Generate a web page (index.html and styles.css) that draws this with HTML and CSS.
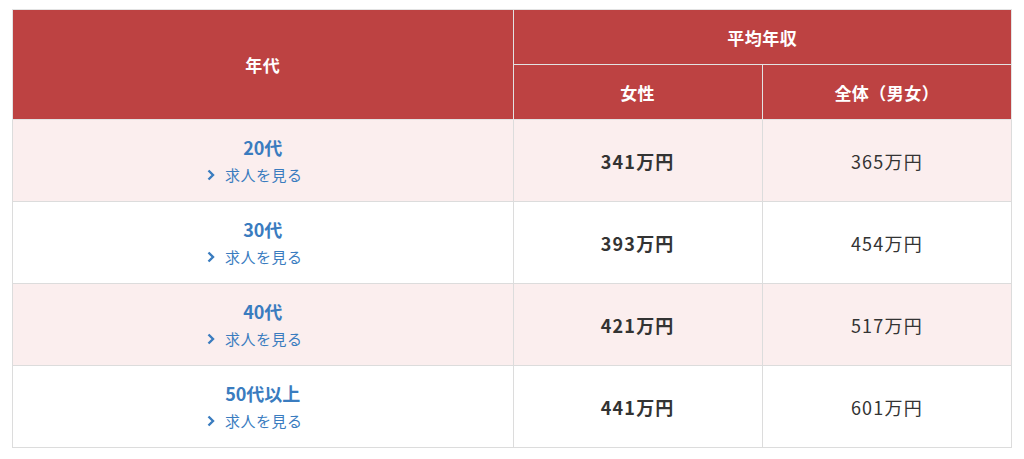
FILE: index.html
```html
<!DOCTYPE html>
<html lang="ja">
<head>
<meta charset="utf-8">
<link rel="stylesheet" href="styles.css">
</head>
<body>
<table class="salary">
  <thead>
    <tr>
      <th rowspan="2" class="col-age">年代</th>
      <th colspan="2">平均年収</th>
    </tr>
    <tr>
      <th class="col-val">女性</th>
      <th class="col-val">全体（男女）</th>
    </tr>
  </thead>
  <tbody>
    <tr class="odd">
      <td><div class="age">20代</div><a class="link" href="#"><svg class="chev" viewBox="0 0 8 12" width="8" height="12"><path d="M1.5 1.5 L6 6 L1.5 10.5" fill="none" stroke="currentColor" stroke-width="2.4"/></svg>求人を見る</a></td>
      <td class="num f">341万円</td>
      <td class="num a">365万円</td>
    </tr>
    <tr>
      <td><div class="age">30代</div><a class="link" href="#"><svg class="chev" viewBox="0 0 8 12" width="8" height="12"><path d="M1.5 1.5 L6 6 L1.5 10.5" fill="none" stroke="currentColor" stroke-width="2.4"/></svg>求人を見る</a></td>
      <td class="num f">393万円</td>
      <td class="num a">454万円</td>
    </tr>
    <tr class="odd">
      <td><div class="age">40代</div><a class="link" href="#"><svg class="chev" viewBox="0 0 8 12" width="8" height="12"><path d="M1.5 1.5 L6 6 L1.5 10.5" fill="none" stroke="currentColor" stroke-width="2.4"/></svg>求人を見る</a></td>
      <td class="num f">421万円</td>
      <td class="num a">517万円</td>
    </tr>
    <tr>
      <td><div class="age">50代以上</div><a class="link" href="#"><svg class="chev" viewBox="0 0 8 12" width="8" height="12"><path d="M1.5 1.5 L6 6 L1.5 10.5" fill="none" stroke="currentColor" stroke-width="2.4"/></svg>求人を見る</a></td>
      <td class="num f">441万円</td>
      <td class="num a">601万円</td>
    </tr>
  </tbody>
</table>
</body>
</html>
```
FILE: styles.css
```css
html, body {
  margin: 0;
  padding: 0;
  background: #fff;
}
body {
  padding: 9px 12px 0 12px;
  font-family: "Noto Sans CJK JP", "Noto Sans", sans-serif;
  color: #333;
}
.salary {
  width: 1000px;
  border-collapse: collapse;
  table-layout: fixed;
}
.salary th, .salary td {
  border: 1px solid #dcdcdc;
  text-align: center;
  vertical-align: middle;
  padding: 0;
}
.salary th {
  background: #bd4242;
  color: #fff;
  font-size: 17px;
  font-weight: 700;
  height: 54px;
  border-color: #e3e3e3;
  letter-spacing: 0.5px;
}
.col-age { width: 50%; }
.col-val { width: 25%; }
.salary td {
  height: 81px;
  font-size: 18px;
}
.odd td {
  background: #fbeeee;
}
.age {
  color: #3a7cbf;
  font-weight: 700;
  font-size: 18px;
  line-height: 26px;
  margin-top: -2px;
}
.link {
  display: inline-flex;
  align-items: center;
  color: #3a7cbf;
  font-size: 15px;
  line-height: 22px;
  text-decoration: none;
  letter-spacing: 0.5px;
  padding-right: 16px;
}
.chev {
  margin-right: 10px;
}
.num {
  letter-spacing: 1.2px;
  padding-left: 2px;
}
.f {
  font-weight: 700;
}
.a {
  font-weight: 400;
}
```
